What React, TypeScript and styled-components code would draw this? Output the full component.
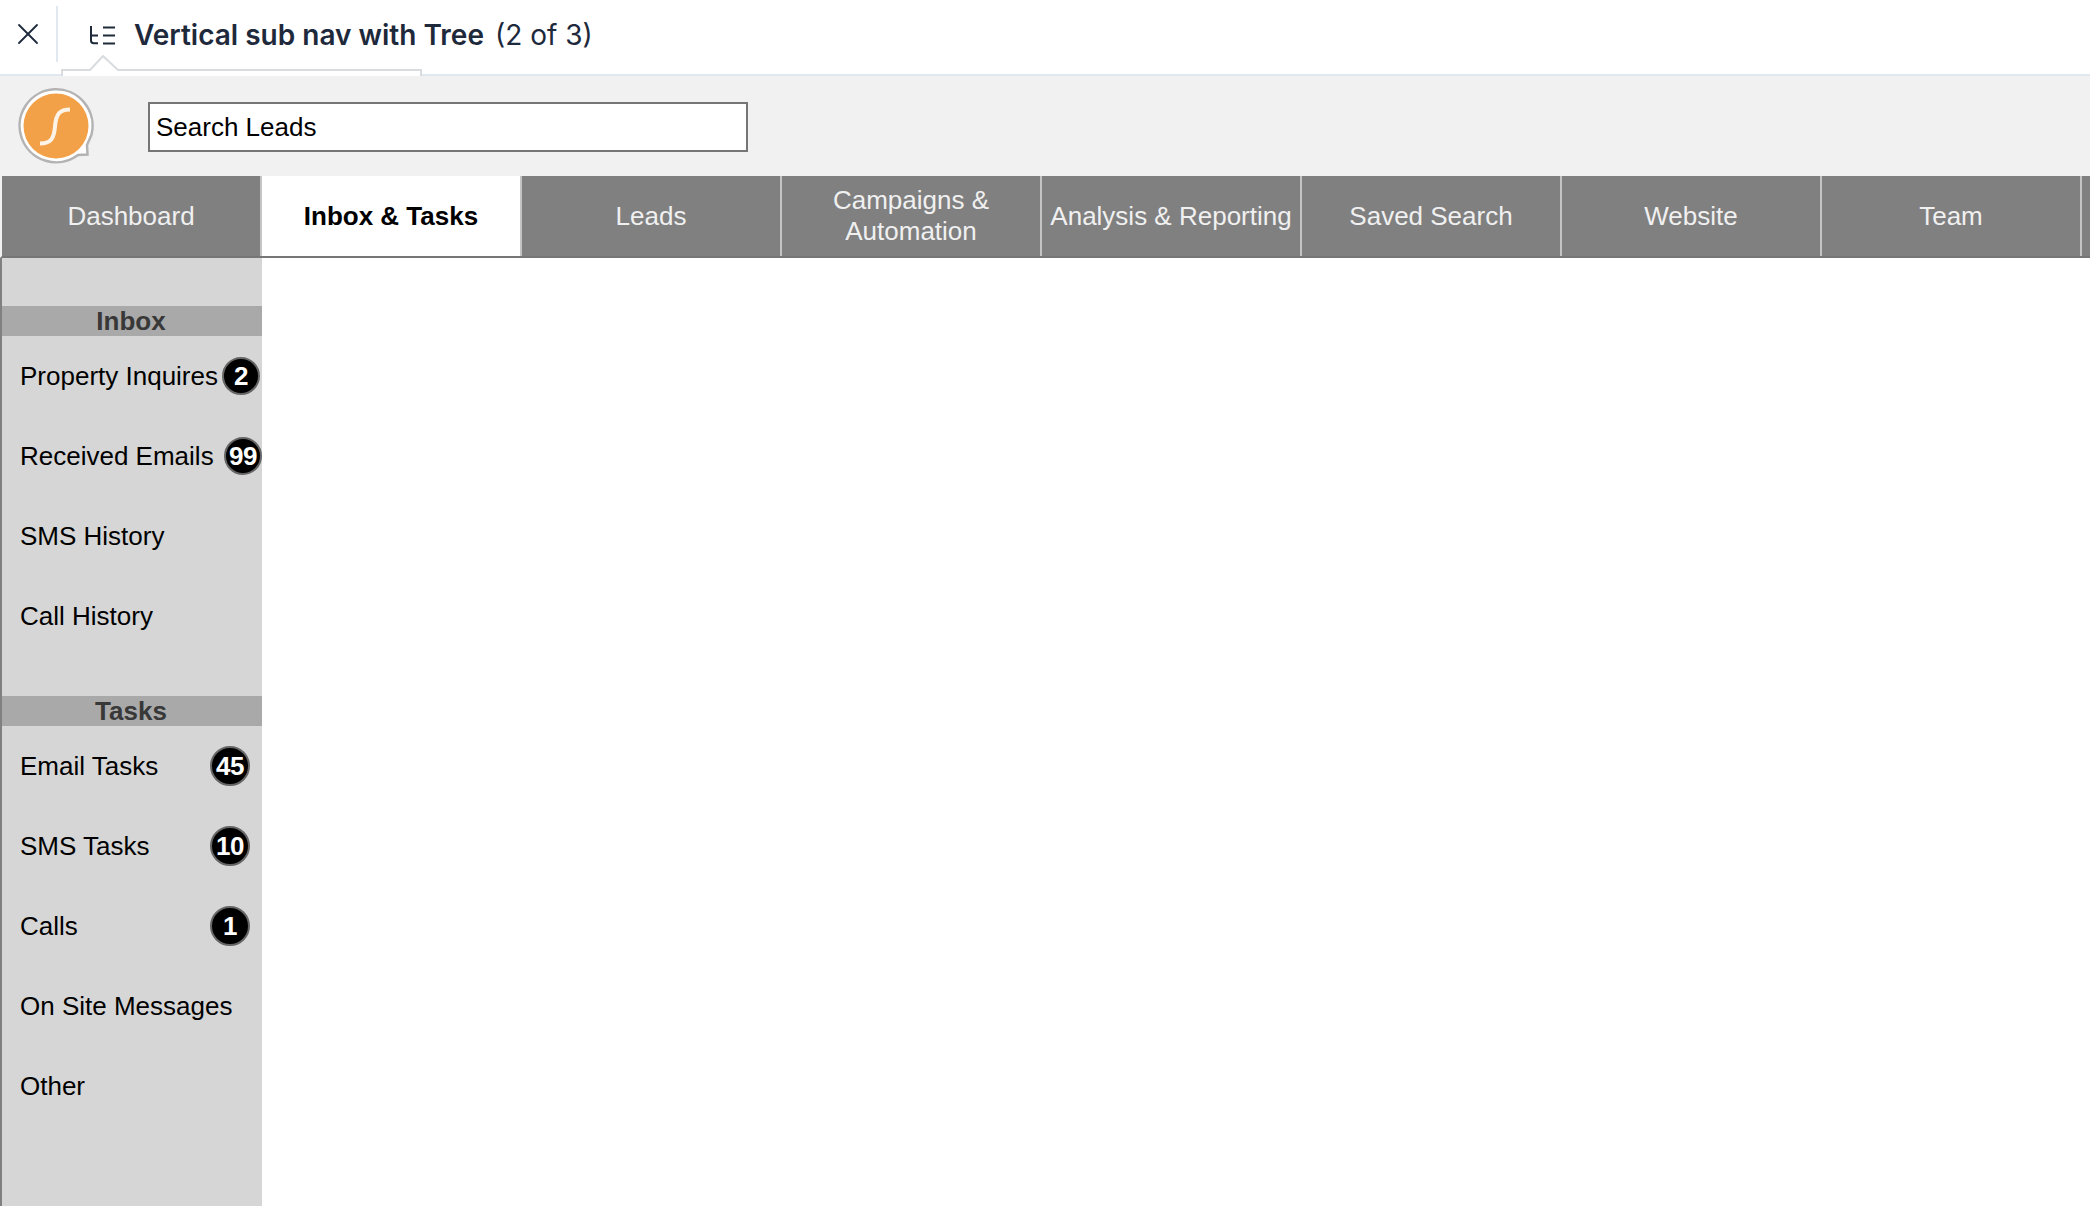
import React from 'react';
import styled, { createGlobalStyle } from 'styled-components';
import { X } from 'lucide-react';

const GlobalStyle = createGlobalStyle`
  html, body {
    margin: 0;
    padding: 0;
    background: #fff;
    overflow: hidden;
  }
  * {
    box-sizing: border-box;
  }
`;

const Page = styled.div`
  width: 2090px;
  height: 1206px;
  display: flex;
  flex-direction: column;
  font-family: 'Liberation Sans', Arial, sans-serif;
  overflow: hidden;
`;

const TopBar = styled.header`
  position: relative;
  flex: none;
  height: 76px;
  display: flex;
  align-items: flex-start;
  border-bottom: 2px solid #e2e8f0;
  background: #fff;
`;

const CloseCell = styled.div`
  width: 58px;
  height: 56px;
  margin-top: 6px;
  display: flex;
  align-items: center;
  justify-content: center;
  border-right: 2px solid #e2e8f0;
  color: #1e293b;
`;

const TitleGroup = styled.div`
  height: 70px;
  display: flex;
  align-items: center;
  padding-left: 31px;
  font-family: Inter, 'Noto Sans', sans-serif;
  font-size: 28px;
  color: #1e293b;
`;

const TreeIcon = styled.svg`
  width: 27px;
  height: 19px;
  margin-right: 18px;
`;

const Title = styled.span`
  font-weight: 600;
`;

const Step = styled.span`
  margin-left: 11px;
  font-weight: 400;
`;

const Notch = styled.svg`
  position: absolute;
  left: 61px;
  top: 55px;
  width: 362px;
  height: 21px;
`;

const SearchBand = styled.div`
  flex: none;
  height: 100px;
  display: flex;
  align-items: center;
  gap: 54px;
  padding-left: 18px;
  background: #f1f1f1;
`;

const Logo = styled.svg`
  width: 76px;
  height: 76px;
  flex: none;
`;

const SearchInput = styled.input`
  width: 600px;
  height: 50px;
  margin-top: 2px;
  padding: 0 6px;
  border: 2px solid #767676;
  border-radius: 0;
  background: #fff;
  font-family: inherit;
  font-size: 26px;
  color: #000;
  outline: none;

  &::placeholder {
    color: #000;
    opacity: 1;
  }
`;

const NavBar = styled.nav`
  flex: none;
  height: 82px;
  display: flex;
  background: #808080;
  border-left: 2px solid #f1f1f1;
  border-bottom: 2px solid #767676;
`;

const NavItem = styled.div<{ $active?: boolean }>`
  flex: none;
  width: 260px;
  padding: 0 4px;
  display: flex;
  align-items: center;
  justify-content: center;
  text-align: center;
  font-size: 26px;
  line-height: 30.7px;
  font-weight: ${p => (p.$active ? 700 : 400)};
  color: ${p => (p.$active ? '#000' : '#f0f0f0')};
  background: ${p => (p.$active ? '#fff' : '#808080')};
  border-right: 2px solid #c4c4c4;
`;

const Body = styled.div`
  flex: 1;
  min-height: 0;
  display: flex;
`;

const Sidebar = styled.aside`
  flex: none;
  width: 262px;
  padding-top: 48px;
  background: #d6d6d6;
  border-left: 2px solid #808080;
`;

const Section = styled.section`
  margin-bottom: 40px;
`;

const SectionTitle = styled.div`
  height: 30px;
  display: flex;
  align-items: center;
  justify-content: center;
  padding-right: 2px;
  background: #a9a9a9;
  font-size: 26px;
  font-weight: 700;
  color: #383838;
`;

const Row = styled.div`
  position: relative;
  height: 80px;
  display: flex;
  align-items: center;
  padding-left: 18px;
  font-size: 26px;
  color: #000;
  white-space: nowrap;
`;

const Badge = styled.span<{ $right: number; $size: number }>`
  position: absolute;
  right: ${p => p.$right}px;
  top: 50%;
  width: ${p => p.$size}px;
  height: ${p => p.$size}px;
  transform: translateY(-50%);
  display: flex;
  align-items: center;
  justify-content: center;
  border: 2px solid #666;
  border-radius: 50%;
  background: #000;
  color: #fff;
  font-size: 26px;
  font-weight: 700;
  letter-spacing: -0.5px;
`;

const navItems = [
  'Dashboard',
  'Inbox & Tasks',
  'Leads',
  'Campaigns & Automation',
  'Analysis & Reporting',
  'Saved Search',
  'Website',
  'Team',
];

const inboxRows = [
  { label: 'Property Inquires', count: 2, right: 2, size: 38 },
  { label: 'Received Emails', count: 99, right: 0, size: 38 },
  { label: 'SMS History' },
  { label: 'Call History' },
];

const taskRows = [
  { label: 'Email Tasks', count: 45, right: 12, size: 40 },
  { label: 'SMS Tasks', count: 10, right: 12, size: 40 },
  { label: 'Calls', count: 1, right: 12, size: 40 },
  { label: 'On Site Messages' },
  { label: 'Other' },
];

type RowData = { label: string; count?: number; right?: number; size?: number };

const renderRows = (rows: RowData[]) =>
  rows.map(r => (
    <Row key={r.label}>
      {r.label}
      {r.count !== undefined && (
        <Badge $right={r.right ?? 0} $size={r.size ?? 38}>
          {r.count}
        </Badge>
      )}
    </Row>
  ));

export default function App() {
  return (
    <Page>
      <GlobalStyle />
      <TopBar>
        <CloseCell>
          <X size={36} strokeWidth={1.2} />
        </CloseCell>
        <TitleGroup>
          <TreeIcon viewBox="0 0 27 19" fill="none" stroke="#1e293b" strokeWidth="2">
            <path d="M2 0v14.500c0 1.800 1 2.800 2.800 2.800H9M2 9.500h7M14 1.500h12M14 9.500h12M14 17.500h12" />
          </TreeIcon>
          <Title>Vertical sub nav with Tree</Title>
          <Step>(2 of 3)</Step>
        </TitleGroup>
        <Notch viewBox="0 0 362 21" fill="#fff" stroke="#d9dcdf" strokeWidth="2">
          <path d="M1 21V15H29L42 1L57 15H360V21" />
        </Notch>
      </TopBar>
      <SearchBand>
        <Logo viewBox="0 0 76 76">
          <path
            d="M73.400 47 69 57 69.500 66.500 60 67A36.500 36.500 0 1 1 73.400 47Z"
            fill="#fff"
            stroke="#b3b3b3"
            strokeWidth="2.500"
          />
          <circle cx="38" cy="38" r="32.500" fill="#f2a149" />
          <path
            d="M52 21.500c-10 0-14 4-15 17-1 12-4 17-15 17"
            fill="none"
            stroke="#fdf3e6"
            strokeWidth="4"
          />
        </Logo>
        <SearchInput placeholder="Search Leads" />
      </SearchBand>
      <NavBar>
        {navItems.map((item, i) => (
          <NavItem key={item} $active={i === 1}>
            {item}
          </NavItem>
        ))}
      </NavBar>
      <Body>
        <Sidebar>
          <Section>
            <SectionTitle>Inbox</SectionTitle>
            {renderRows(inboxRows)}
          </Section>
          <Section>
            <SectionTitle>Tasks</SectionTitle>
            {renderRows(taskRows)}
          </Section>
        </Sidebar>
      </Body>
    </Page>
  );
}
